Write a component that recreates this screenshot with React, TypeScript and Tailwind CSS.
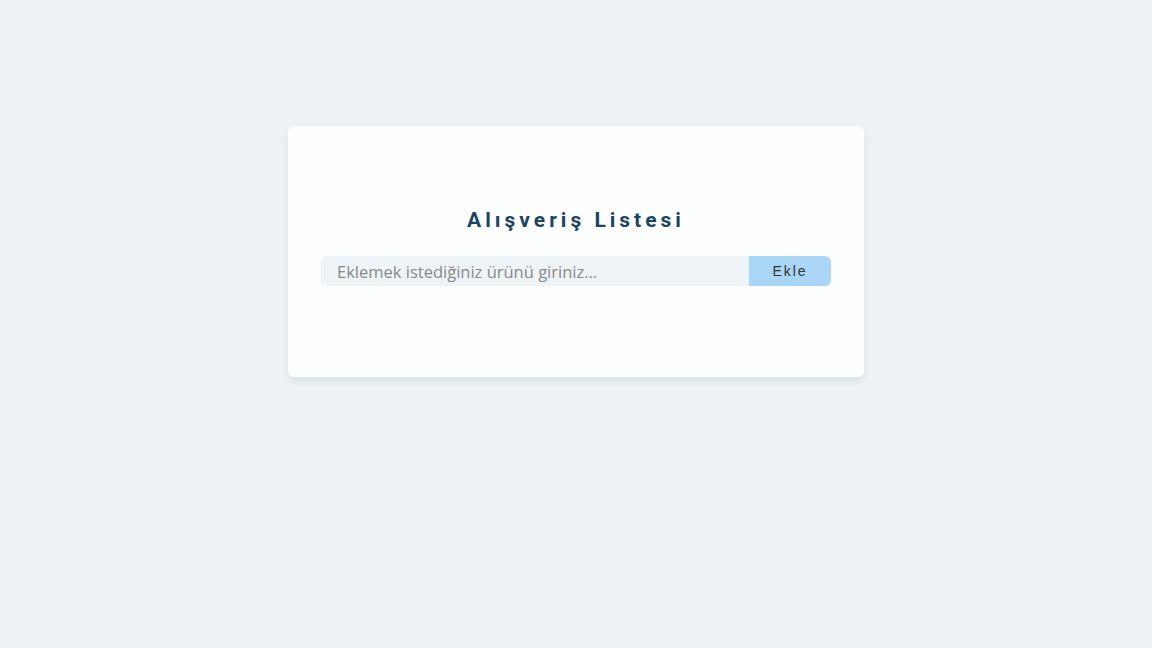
import React from "react";

const App = () => {
  return (
    <div className="w-full h-[648px] bg-[#eef2f5] pt-[126px]">
      <div className="mx-auto w-[576px] h-[251px] bg-[#fdfefe] rounded-md shadow-[0_4px_8px_rgba(0,0,0,0.08)] px-[33px] pt-[80px]">
        <h1 className="text-center text-[21px] leading-[28px] font-bold tracking-[4px] text-[#1d4460] font-['Roboto',sans-serif]">
          Alışveriş Listesi
        </h1>
        <div className="flex mt-[22px] h-[30px]">
          <input
            type="text"
            placeholder="Eklemek istediğiniz ürünü giriniz..."
            className="flex-1 min-w-0 h-full bg-[#eef3f6] rounded-l-md px-4 text-[16.5px] font-['Open_Sans',sans-serif] text-[#444] placeholder:text-[#8a8a8a] outline-none"
          />
          <button className="w-[82px] h-full bg-[#aad6f6] rounded-r-md text-[14px] tracking-[2px] text-[#333] font-['Liberation_Sans',Arial,sans-serif]">
            Ekle
          </button>
        </div>
      </div>
    </div>
  );
};

export default App;
